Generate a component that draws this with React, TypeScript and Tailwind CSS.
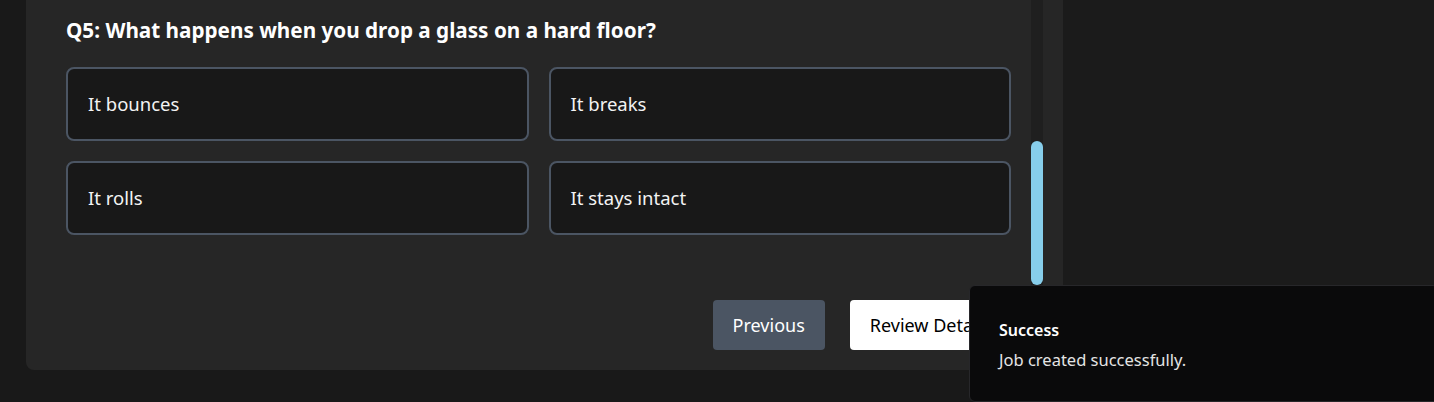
import React from "react";

const options = ["It bounces", "It breaks", "It rolls", "It stays intact"];

export default function App() {
  return (
    <div className="relative h-[402px] w-[1434px] overflow-hidden bg-[#191919] font-['Noto_Sans',sans-serif] text-white">
      <div className="flex h-full">
        {/* Scrolling quiz column */}
        <div className="flex w-[1043px] shrink-0">
          <div className="flex-1 pl-[26px]">
            <div className="rounded-b-lg bg-[#262626] pb-5 pl-10 pr-5 pt-4">
              <h2 className="mb-[23px] text-[20.7px] font-bold leading-7">
                Q5: What happens when you drop a glass on a hard floor?
              </h2>
              <div className="grid grid-cols-2 gap-5">
                {options.map((o) => (
                  <button
                    key={o}
                    className="rounded-lg border-2 border-[#4b5563] bg-[#181818] px-5 py-[21px] text-left text-[18.5px] leading-7 text-[#f3f3f3]"
                  >
                    {o}
                  </button>
                ))}
              </div>
              <div className="mt-[65px] flex justify-end gap-[25px]">
                <button className="h-[50px] rounded bg-[#4b5563] px-5 text-lg text-white">
                  Previous
                </button>
                <button className="h-[50px] rounded bg-white px-5 text-lg text-black">
                  Review Details
                </button>
              </div>
            </div>
          </div>
          {/* Scrollbar */}
          <div className="w-3 bg-[#1f1f1f] pt-[141px]">
            <div className="h-[144px] rounded-full bg-[#87ceeb]" />
          </div>
        </div>
        <div className="w-5 bg-[#262626]" />
        <div className="flex-1 bg-[#1b1b1b]" />
      </div>

      {/* Toast */}
      <div className="absolute left-[969px] top-[285px] h-[117px] w-[470px] rounded-md border border-[#27272a] bg-[#0a0a0b] px-[29px] pt-8">
        <div className="text-base font-semibold leading-6 text-white">Success</div>
        <div className="mt-[6px] text-[16.5px] leading-6 text-[#e4e4e4]">Job created successfully.</div>
      </div>
    </div>
  );
}
